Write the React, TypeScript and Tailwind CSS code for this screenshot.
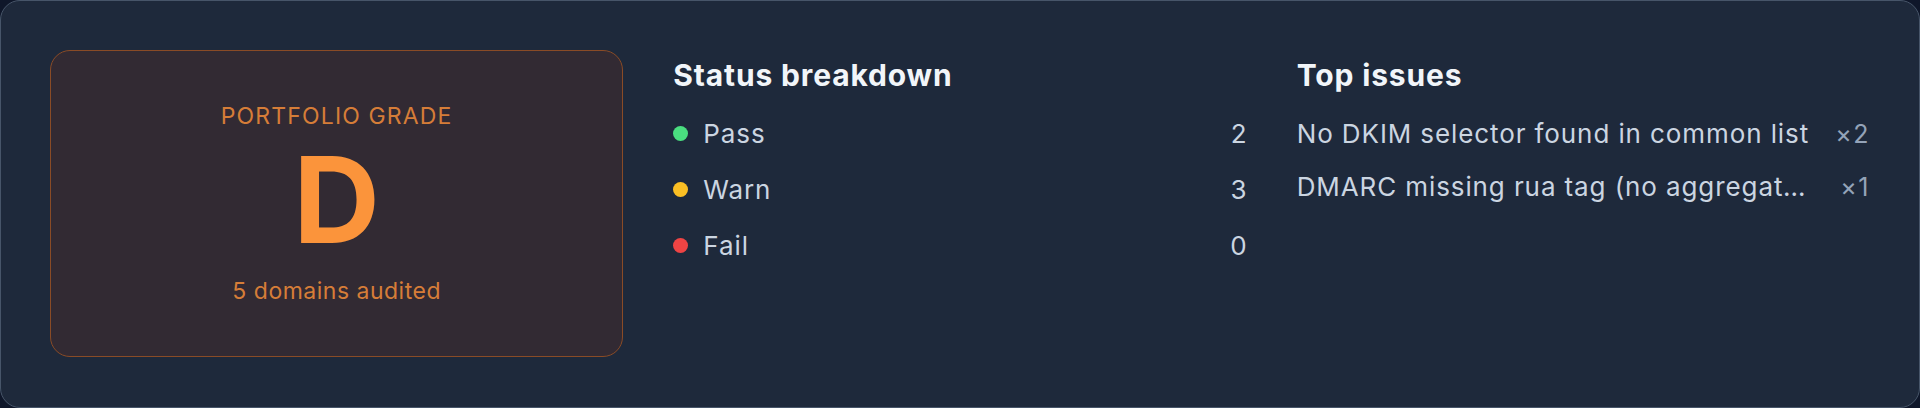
import React from "react";

type StatusRow = { label: string; count: number; dot: string };

const statuses: StatusRow[] = [
  { label: "Pass", count: 2, dot: "bg-[#4ade80]" },
  { label: "Warn", count: 3, dot: "bg-[#fbbf24]" },
  { label: "Fail", count: 0, dot: "bg-[#ef4444]" },
];

const issues = [
  { text: "No DKIM selector found in common list", count: 2 },
  { text: "DMARC missing rua tag (no aggregate reports configured)", count: 1 },
];

function GradeCard() {
  return (
    <div className="flex flex-col items-center justify-center rounded-[20px] border border-[#8a4b26] bg-[#322a33]">
      <div className="text-[23px] leading-[35px] uppercase tracking-[0.05em] text-[#d67d38]">
        Portfolio grade
      </div>
      <div className="mt-[6px] text-[120px] leading-[120px] font-bold text-[#fb943b]">D</div>
      <div className="mt-[14px] text-[23px] leading-[35px] tracking-[0.5px] text-[#d67d38]">5 domains audited</div>
    </div>
  );
}

function StatusBreakdown() {
  return (
    <div className="min-w-0">
      <h2 className="mt-[5px] text-[30px] leading-[40px] font-bold tracking-[0.85px] text-[#f1f5f9]">
        Status breakdown
      </h2>
      <ul className="mt-[21px] flex flex-col gap-[21px]">
        {statuses.map((s) => (
          <li key={s.label} className="flex h-[35px] items-center justify-between">
            <div className="flex items-center gap-[15px]">
              <span className={`h-[15px] w-[15px] rounded-full ${s.dot}`} />
              <span className="text-[26px] leading-[35px] tracking-[0.9px] text-[#cbd5e1]">{s.label}</span>
            </div>
            <span className="text-[26px] leading-[35px] text-[#cbd5e1]">{s.count}</span>
          </li>
        ))}
      </ul>
    </div>
  );
}

function TopIssues() {
  return (
    <div className="min-w-0">
      <h2 className="mt-[5px] text-[30px] leading-[40px] font-bold tracking-[0.85px] text-[#f1f5f9]">Top issues</h2>
      <ul className="mt-[21px] flex flex-col gap-[17px]">
        {issues.map((i) => (
          <li key={i.text} className="flex items-baseline justify-between gap-[24px]">
            <span className="min-w-0 truncate text-[26px] leading-[35px] tracking-[0.9px] text-[#cbd5e1]">
              {i.text}
            </span>
            <span className="shrink-0 text-[25px] leading-[35px] tracking-[1.5px] text-[#94a3b8]">×{i.count}</span>
          </li>
        ))}
      </ul>
    </div>
  );
}

export default function App() {
  return (
    <div className="min-h-screen bg-[#0f172a]" style={{ fontFamily: "Inter, 'Noto Sans', sans-serif" }}>
      <div className="grid h-[408px] grid-cols-3 gap-[50px] rounded-[20px] border border-[#475569] bg-[#1e293b] px-[49px] pt-[49px] pb-[50px]">
        <GradeCard />
        <StatusBreakdown />
        <TopIssues />
      </div>
    </div>
  );
}
